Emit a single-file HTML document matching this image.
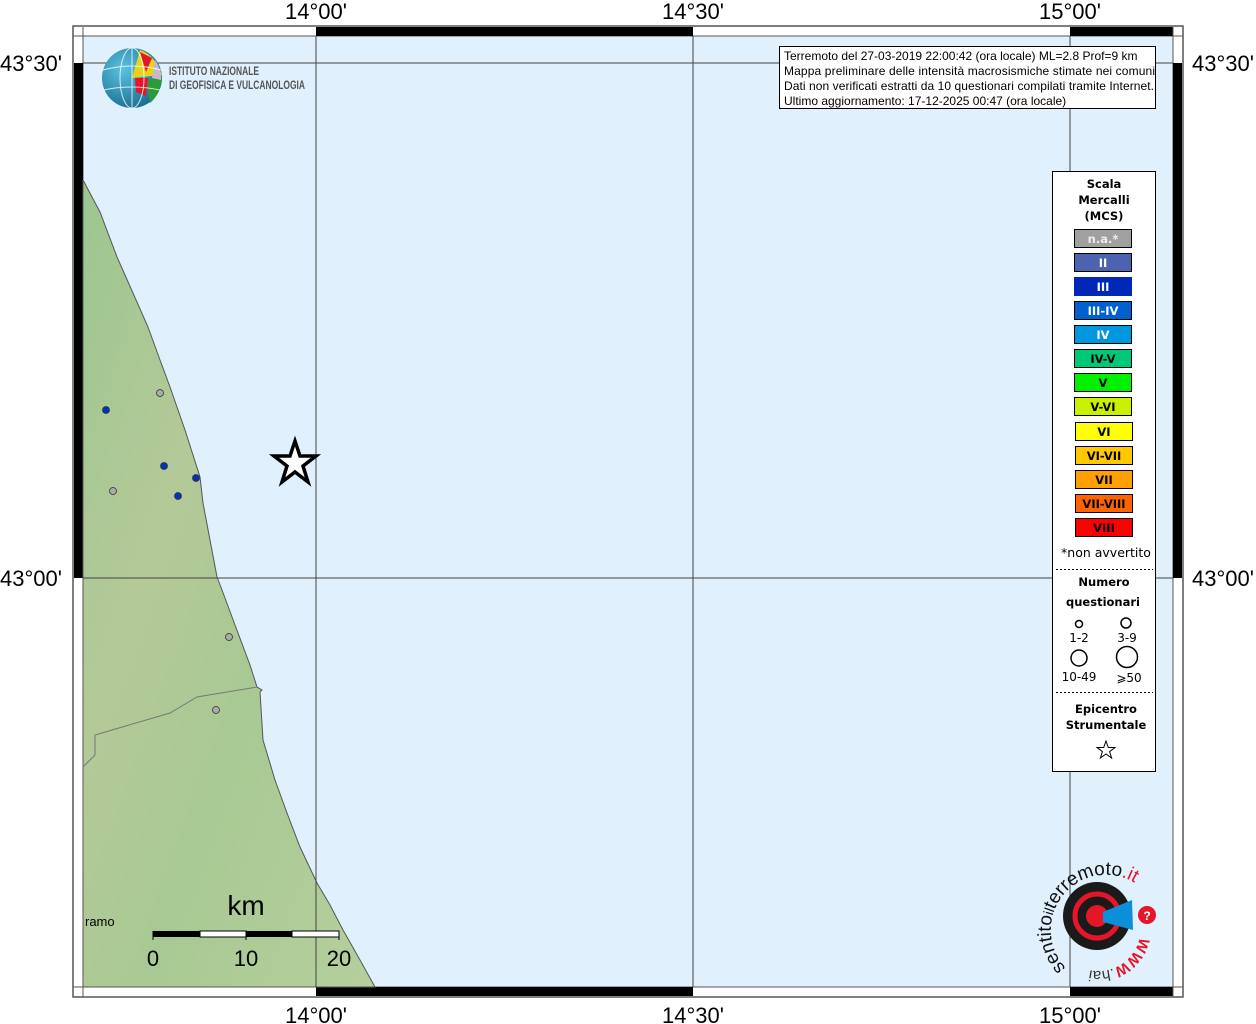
<!DOCTYPE html>
<html><head><meta charset="utf-8"><style>
html,body{margin:0;padding:0;background:#fff;}
svg{display:block;font-family:"Liberation Sans",sans-serif;}
.b text{font-family:"DejaVu Sans","Liberation Sans",sans-serif;font-weight:bold;font-size:11.5px;}
.d text{font-family:"DejaVu Sans","Liberation Sans",sans-serif;}
</style></head><body>
<svg width="1256" height="1024" viewBox="0 0 1256 1024" xmlns="http://www.w3.org/2000/svg">
<defs>
<linearGradient id="land" x1="0" y1="0" x2="1" y2="1">
<stop offset="0" stop-color="#9cc690"/><stop offset="0.35" stop-color="#b4c998"/><stop offset="0.6" stop-color="#a8c993"/><stop offset="1" stop-color="#b6cf9c"/>
</linearGradient>
<radialGradient id="globe" cx="0.35" cy="0.35" r="0.7"><stop offset="0" stop-color="#5cc3df"/><stop offset="1" stop-color="#1a6f95"/></radialGradient>
</defs>
<rect x="73" y="26" width="1110" height="971" fill="#fff" stroke="#555" stroke-width="1.5"/>
<rect x="83" y="36" width="1090" height="951" fill="#e0f0fc" stroke="#555" stroke-width="1"/>
<rect x="316" y="27" width="377" height="9" fill="#000"/>
<rect x="1070" y="27" width="103" height="9" fill="#000"/>
<rect x="316" y="987" width="377" height="9" fill="#000"/>
<rect x="1070" y="987" width="103" height="9" fill="#000"/>
<rect x="74" y="63" width="9" height="515" fill="#000"/>
<rect x="1173" y="63" width="9" height="515" fill="#000"/>
<line x1="83" y1="36" x2="73" y2="36" stroke="#555"/>
<line x1="83" y1="987" x2="73" y2="987" stroke="#555"/>
<line x1="1173" y1="36" x2="1183" y2="36" stroke="#555"/>
<line x1="1173" y1="987" x2="1183" y2="987" stroke="#555"/>
<line x1="83" y1="27" x2="83" y2="36" stroke="#555"/>
<line x1="1173" y1="27" x2="1173" y2="36" stroke="#555"/>
<line x1="83" y1="987" x2="83" y2="997" stroke="#555"/>
<line x1="1173" y1="987" x2="1173" y2="997" stroke="#555"/>
<path d="M83,180 L100,212 L117,257 L125,275 L148,327 L160,360 L170,387 L185,430 L200,477 L203,503 L210,540 L217,577 L222,590 L235,625 L250,665 L257,687 L262,690 L260,692 L263,740 L275,780 L287,813 L300,847 L317,883 L330,905 L343,930 L360,960 L375,987 L83,987 Z" fill="url(#land)" stroke="#555" stroke-width="1"/>
<path d="M83,767 L95,755 L95,735 L170,713 L197,697 L257,687" fill="none" stroke="#777" stroke-width="1"/>
<g stroke="#444" stroke-width="1">
<line x1="316" y1="36" x2="316" y2="987"/><line x1="693" y1="36" x2="693" y2="987"/><line x1="1070" y1="36" x2="1070" y2="987"/>
<line x1="83" y1="63" x2="1173" y2="63"/><line x1="83" y1="578" x2="1173" y2="578"/>
</g>
<g stroke="#333" stroke-width="0.8">
<circle cx="106" cy="410" r="3.5" fill="#0033bb"/><circle cx="164" cy="466" r="3.5" fill="#0033bb"/>
<circle cx="178" cy="496" r="3.5" fill="#0033bb"/><circle cx="196" cy="478" r="3.5" fill="#0033bb"/>
<circle cx="160" cy="393" r="3.5" fill="#aaa"/><circle cx="113" cy="491" r="3.5" fill="#aaa"/>
<circle cx="229" cy="637" r="3.5" fill="#aaa"/><circle cx="216" cy="710" r="3.5" fill="#aaa"/>
</g>
<polygon points="295,441 300,456 316,456 303,466 308,482 295,472 282,482 287,466 274,456 290,456" fill="#fff" stroke="#000" stroke-width="3.5"/>
<rect x="153" y="931" width="47" height="6" fill="#000"/><rect x="200" y="931" width="46" height="6" fill="#fff" stroke="#000"/>
<rect x="246" y="931" width="46" height="6" fill="#000"/><rect x="292" y="931" width="47" height="6" fill="#fff" stroke="#000"/>
<line x1="153" y1="931" x2="153" y2="940" stroke="#000"/><line x1="246" y1="931" x2="246" y2="940" stroke="#000"/><line x1="339" y1="931" x2="339" y2="940" stroke="#000"/>
<text x="246" y="915" font-size="28" text-anchor="middle">km</text>
<text x="153" y="966" font-size="22" text-anchor="middle">0</text>
<text x="246" y="966" font-size="22" text-anchor="middle">10</text>
<text x="339" y="966" font-size="22" text-anchor="middle">20</text>
<text x="85" y="926" font-size="13">ramo</text>
<g font-size="22" text-anchor="middle">
<text x="316" y="19">14°00'</text><text x="693" y="19">14°30'</text><text x="1070" y="19">15°00'</text>
<text x="316" y="1023">14°00'</text><text x="693" y="1023">14°30'</text><text x="1070" y="1023">15°00'</text>
</g>
<g font-size="22"><text x="0" y="71">43°30'</text><text x="0" y="586">43°00'</text><text x="1192" y="71">43°30'</text><text x="1192" y="586">43°00'</text></g>
<rect x="779.5" y="46.5" width="376" height="62" fill="#fff" stroke="#000"/>
<g font-size="12"><text x="784" y="60">Terremoto del 27-03-2019 22:00:42 (ora locale) ML=2.8 Prof=9 km</text>
<text x="784" y="75" textLength="371">Mappa preliminare delle intensità macrosismiche stimate nei comuni</text>
<text x="784" y="90" textLength="370">Dati non verificati estratti da 10 questionari compilati tramite Internet.</text>
<text x="784" y="105">Ultimo aggiornamento: 17-12-2025 00:47 (ora locale)</text></g>
<circle cx="132" cy="78" r="30" fill="url(#globe)"/>
<path d="M132,78 L140,50 Q155,55 162,75 Z" fill="#e8d21a"/>
<path d="M140,52 L152,58 L146,72 Z" fill="#e3162a"/>
<path d="M146,80 L162,78 Q160,95 150,103 Z" fill="#2a9a3a"/>
<path d="M135,78 L148,78 L146,96 L136,92 Z" fill="#e3162a"/>
<path d="M155,60 Q162,70 161,80 L152,78 Z" fill="#c9b8c8"/>
<g stroke="#fff" stroke-width="1" fill="none" opacity="0.8"><ellipse cx="132" cy="78" rx="12" ry="30"/><path d="M103,70 Q132,62 161,70"/><path d="M104,90 Q132,84 160,90"/><line x1="132" y1="48" x2="132" y2="108"/></g>
<text x="169" y="75" font-size="12" fill="#555" font-weight="bold" textLength="90" lengthAdjust="spacingAndGlyphs">ISTITUTO NAZIONALE</text>
<text x="169" y="89" font-size="12" fill="#555" font-weight="bold" textLength="136" lengthAdjust="spacingAndGlyphs">DI GEOFISICA E VULCANOLOGIA</text>
<rect x="1052.5" y="171.5" width="103" height="600" fill="#fff" stroke="#000"/>
<g class="b" text-anchor="middle">
<text x="1104" y="188">Scala</text><text x="1104" y="204">Mercalli</text><text x="1104" y="220">(MCS)</text>
</g>
<g stroke="#000" stroke-width="1">
<rect x="1074.5" y="229.5" width="57" height="18" fill="#a0a0a0"/>
<rect x="1074.5" y="253.5" width="57" height="18" fill="#4c64b0"/>
<rect x="1074.5" y="277.5" width="57" height="18" fill="#0028b8" stroke="#0028b8"/>
<rect x="1074.5" y="301.5" width="57" height="18" fill="#0060cc"/>
<rect x="1074.5" y="325.5" width="57" height="18" fill="#0096e0"/>
<rect x="1074.5" y="349.5" width="57" height="18" fill="#00c878"/>
<rect x="1074.5" y="373.5" width="57" height="18" fill="#00f000"/>
<rect x="1074.5" y="397.5" width="57" height="18" fill="#c8f000"/>
<rect x="1075.5" y="422.5" width="57" height="18" fill="#ffff00"/>
<rect x="1075.5" y="446.5" width="57" height="18" fill="#ffc800"/>
<rect x="1075.5" y="470.5" width="57" height="18" fill="#ffa000"/>
<rect x="1075.5" y="494.5" width="57" height="18" fill="#ff6400"/>
<rect x="1075.5" y="518.5" width="57" height="18" fill="#ff0000"/>
</g>
<g class="b" text-anchor="middle">
<text x="1103" y="243" fill="#eee">n.a.*</text>
<text x="1103" y="267" fill="#fff">II</text>
<text x="1103" y="291" fill="#fff">III</text>
<text x="1103" y="315" fill="#fff">III-IV</text>
<text x="1103" y="339" fill="#fff">IV</text>
<text x="1103" y="363">IV-V</text>
<text x="1103" y="387">V</text>
<text x="1103" y="411">V-VI</text>
<text x="1104" y="436">VI</text>
<text x="1104" y="460">VI-VII</text>
<text x="1104" y="484">VII</text>
<text x="1104" y="508">VII-VIII</text>
<text x="1104" y="532">VIII</text>
</g>
<g class="d"><text x="1106" y="557" font-size="12.5" text-anchor="middle">*non avvertito</text></g>
<line x1="1056" y1="569.5" x2="1153" y2="569.5" stroke="#000" stroke-dasharray="2,2"/>
<g class="b" text-anchor="middle"><text x="1104" y="586">Numero</text><text x="1103" y="606">questionari</text></g>
<g fill="none" stroke="#000" stroke-width="1.5"><circle cx="1079" cy="624" r="3.5"/><circle cx="1126" cy="623" r="5"/><circle cx="1079" cy="658" r="8"/><circle cx="1127" cy="657" r="10.5"/></g>
<g class="d" font-size="12" text-anchor="middle"><text x="1079" y="642">1-2</text><text x="1127" y="642">3-9</text><text x="1079" y="681">10-49</text><text x="1129" y="682">⩾50</text></g>
<line x1="1056" y1="692.5" x2="1153" y2="692.5" stroke="#000" stroke-dasharray="2,2"/>
<g class="b" text-anchor="middle"><text x="1106" y="713">Epicentro</text><text x="1106" y="729">Strumentale</text></g>
<polygon points="1106,741 1108.3,747.5 1115,747.5 1109.6,751.6 1111.6,758 1106,754 1100.4,758 1102.4,751.6 1097,747.5 1103.7,747.5" fill="#fff" stroke="#000" stroke-width="1"/>
<circle cx="1097" cy="916" r="34" fill="#1a1a1a"/>
<circle cx="1097" cy="916" r="22" fill="none" stroke="#e3162a" stroke-width="5"/>
<circle cx="1097" cy="916" r="11" fill="#e3162a"/>
<path d="M1103,912 L1132,900 L1133,930 L1103,922 Z" fill="#0a8fd8"/>
<circle cx="1147" cy="915" r="9" fill="#e3162a"/>
<text x="1147" y="920" font-size="12" font-weight="bold" fill="#fff" text-anchor="middle">?</text>
<path id="arc" d="M1066,968 A52,52 0 1,1 1146,892" fill="none"/>
<text font-size="19" fill="#111"><textPath href="#arc">sentito<tspan font-size="14">il</tspan>terremoto<tspan fill="#e3162a">.it</tspan></textPath></text>
<path id="arc2" d="M1140,935 A42,42 0 0,1 1068,958" fill="none"/>
<text font-size="15" font-weight="bold" fill="#e3162a"><textPath href="#arc2" startOffset="2">WWW<tspan fill="#333" font-weight="normal">.hai</tspan></textPath></text>
</svg>
</body></html>
